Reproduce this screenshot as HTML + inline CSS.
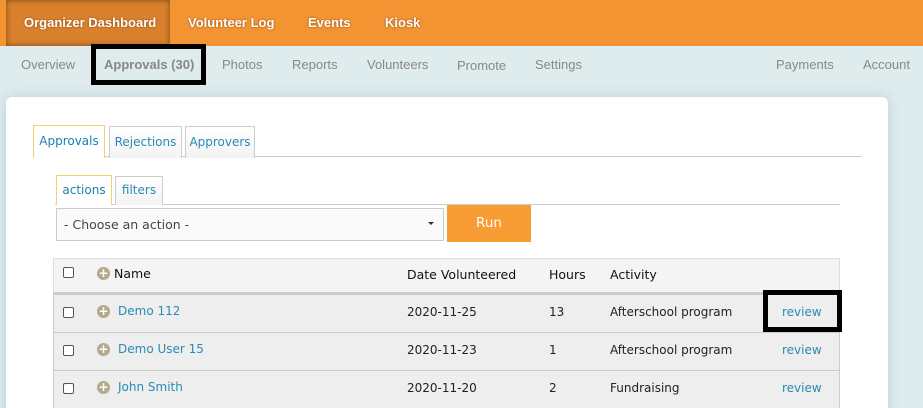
<!DOCTYPE html>
<html><head><style>
*{margin:0;padding:0;box-sizing:border-box}
html,body{width:923px;height:408px;overflow:hidden}
body{background:#dfecee;font-family:"Liberation Sans",Arial,sans-serif;position:relative}
.top{position:absolute;left:0;top:0;width:923px;height:46px;background:#f39433}
.top span{position:absolute;top:15px;color:#fff;font-weight:bold;font-size:13px;text-shadow:0 0 2px #8a4a10}
.od{position:absolute;left:6px;top:0;width:164px;height:46px;background:#d9802c;box-shadow:0 0 6px rgba(0,0,0,.45) inset}
.sub{position:absolute;top:57px;color:#888;font-size:13px}
.card{position:absolute;left:6px;top:97px;width:882px;height:330px;background:#fff;border-radius:6px;box-shadow:0 0 12px rgba(150,180,190,.5)}
.t{position:absolute;font-family:"DejaVu Sans",Verdana,sans-serif;font-size:12px}
.tab{position:absolute;height:32px;border:1px solid #ccc;border-bottom:none;color:#2a8ab8;font-family:"DejaVu Sans",Verdana,sans-serif;font-size:12px;text-align:center;line-height:30px;background:linear-gradient(#fff,#f3f3f3)}
.tab.a{border-color:#f2d36b;background:#fff;color:#1d7fb0;height:33px}
.row{position:absolute;left:53px;width:787px;background:#eee;border:1px solid #ccc;border-top:none}
.cb{position:absolute;left:63px;width:11px;height:11px;border:1px solid #555;border-radius:2px;background:#fff}
.plus{position:absolute;left:97px;width:13px;height:13px;border-radius:50%;background:#b3a98c;color:#fff;font-size:12px;font-weight:bold;line-height:13px;text-align:center;font-family:"DejaVu Sans",sans-serif}
.lnk{color:#2a8ab8}
.h{color:#111;font-size:12.5px}
</style></head><body>
<div class="top"><div class="od"></div>
<span style="left:24px">Organizer Dashboard</span>
<span style="left:188px">Volunteer Log</span>
<span style="left:308px">Events</span>
<span style="left:385px">Kiosk</span></div>
<span class="sub" style="left:21px">Overview</span>
<span class="sub" style="left:104px;font-weight:bold">Approvals (30)</span>
<div style="position:absolute;left:91px;top:44px;width:115px;height:41px;border:5px solid #000"></div>
<span class="sub" style="left:222px">Photos</span>
<span class="sub" style="left:292px">Reports</span>
<span class="sub" style="left:367px">Volunteers</span>
<span class="sub" style="left:457px;top:58px">Promote</span>
<span class="sub" style="left:535px">Settings</span>
<span class="sub" style="left:776px">Payments</span>
<span class="sub" style="left:863px">Account</span>
<div class="card"></div>
<div style="position:absolute;left:33px;top:156px;width:829px;height:1px;background:#ccc"></div>
<div class="tab a" style="left:33px;top:125px;width:72px">Approvals</div>
<div class="tab" style="left:109px;top:126px;width:73px">Rejections</div>
<div class="tab" style="left:185px;top:126px;width:70px">Approvers</div>
<div style="position:absolute;left:55px;top:204px;width:785px;height:1px;background:#ccc"></div>
<div class="tab a" style="left:56px;top:175px;width:56px;height:30px;line-height:28px">actions</div>
<div class="tab" style="left:115px;top:176px;width:48px;height:29px;line-height:27px">filters</div>
<div style="position:absolute;left:56px;top:208px;width:388px;height:33px;border:1px solid #ccc;background:#fafafa"></div>
<span class="t" style="left:64px;top:217px;color:#444;font-size:12.5px">- Choose an action -</span>
<span style="position:absolute;left:428px;top:222px;border:3px solid transparent;border-top:3px solid #333"></span>
<div style="position:absolute;left:447px;top:205px;width:84px;height:37px;background:#f89d33;color:#fff;font-family:'DejaVu Sans',sans-serif;font-size:13.5px;text-align:center;line-height:37px">Run</div>
<div style="position:absolute;left:53px;top:258px;width:787px;height:37px;background:#f4f4f4;border:1px solid #ddd;border-bottom:3px solid #ccc"></div>
<div class="cb" style="top:267px"></div><div class="plus" style="top:267px">+</div>
<span class="t h" style="left:114px;top:266px">Name</span>
<span class="t h" style="left:407px;top:267px">Date Volunteered</span>
<span class="t h" style="left:549px;top:267px">Hours</span>
<span class="t h" style="left:610px;top:267px">Activity</span>
<div class="row" style="top:295px;height:38px"></div>
<div class="row" style="top:333px;height:38px"></div>
<div class="row" style="top:371px;height:40px"></div>
<div class="cb" style="top:307px"></div><div class="plus" style="top:305px">+</div>
<span class="t lnk" style="left:118px;top:304px">Demo 112</span>
<span class="t" style="left:407px;top:305px;color:#222">2020-11-25</span>
<span class="t" style="left:549px;top:305px;color:#222">13</span>
<span class="t" style="left:610px;top:305px;color:#222">Afterschool program</span>
<span class="t lnk" style="left:782px;top:305px">review</span>
<div style="position:absolute;left:763px;top:290px;width:79px;height:42px;border:5px solid #000"></div>
<div class="cb" style="top:345px"></div><div class="plus" style="top:343px">+</div>
<span class="t lnk" style="left:118px;top:342px">Demo User 15</span>
<span class="t" style="left:407px;top:343px;color:#222">2020-11-23</span>
<span class="t" style="left:549px;top:343px;color:#222">1</span>
<span class="t" style="left:610px;top:343px;color:#222">Afterschool program</span>
<span class="t lnk" style="left:782px;top:343px">review</span>
<div class="cb" style="top:383px"></div><div class="plus" style="top:381px">+</div>
<span class="t lnk" style="left:118px;top:380px">John Smith</span>
<span class="t" style="left:407px;top:381px;color:#222">2020-11-20</span>
<span class="t" style="left:549px;top:381px;color:#222">2</span>
<span class="t" style="left:610px;top:381px;color:#222">Fundraising</span>
<span class="t lnk" style="left:782px;top:381px">review</span>
</body></html>
